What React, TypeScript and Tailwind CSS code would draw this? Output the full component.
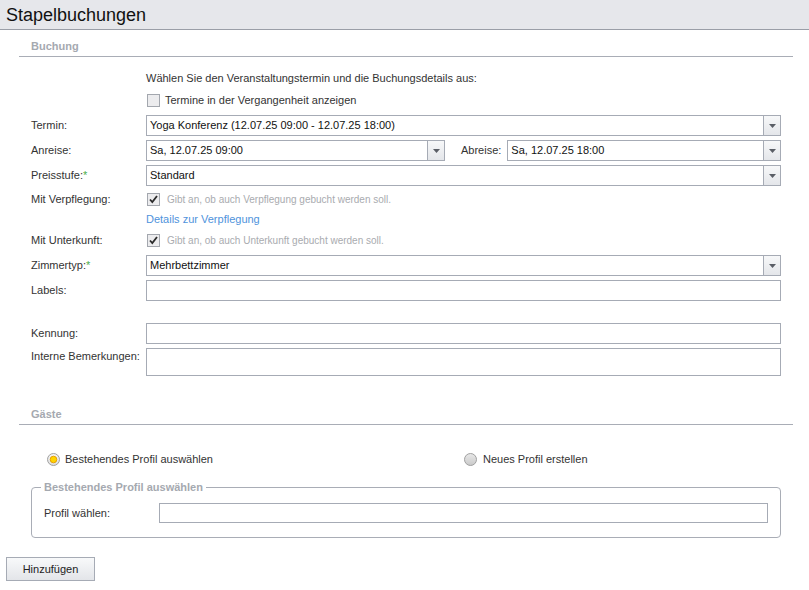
import React from 'react';

const border = 'border border-[#a6abb5]';

function Arrow() {
  return (
    <span className="w-[17px] self-stretch border-l border-[#a6abb5] bg-gradient-to-b from-[#f7f8f9] to-[#e4e6ea] flex items-center justify-center">
      <svg width="7" height="4" viewBox="0 0 7 4">
        <path d="M0 0h7L3.5 4z" fill="#5a5e66" />
      </svg>
    </span>
  );
}

function Select({ value, className = '' }: { value: string; className?: string }) {
  return (
    <div className={`${border} h-[21px] bg-white flex items-center ${className}`}>
      <span className="flex-1 px-[3px] text-[#111] truncate">{value}</span>
      <Arrow />
    </div>
  );
}

function Input({ className = 'h-[21px]' }: { className?: string }) {
  return <div className={`${border} bg-white flex-1 ${className}`} />;
}

function Checkbox({ checked }: { checked?: boolean }) {
  return (
    <span className="w-[13px] h-[13px] shrink-0 border border-[#a3a7ae] bg-[#ececee] flex items-center justify-center">
      {checked && (
        <svg width="9" height="9" viewBox="0 0 9 9">
          <path d="M1 4.5l2.3 2.6L8 1" fill="none" stroke="#2b2b2b" strokeWidth="1.8" />
        </svg>
      )}
    </span>
  );
}

function Radio({ selected }: { selected?: boolean }) {
  return (
    <svg width="13" height="13" viewBox="0 0 13 13" className="shrink-0">
      <defs>
        <linearGradient id={selected ? 'rs' : 'ru'} x1="0" y1="0" x2="0" y2="1">
          <stop offset="0" stopColor={selected ? '#f6f6f6' : '#e9e9e9'} />
          <stop offset="1" stopColor={selected ? '#dcdcdc' : '#c9c9c9'} />
        </linearGradient>
      </defs>
      <circle cx="6.5" cy="6.5" r="6" fill={`url(#${selected ? 'rs' : 'ru'})`} stroke="#a0a0a0" />
      {selected && <circle cx="6.5" cy="6.5" r="3.3" fill="#ffd400" stroke="#e29a00" strokeWidth="0.9" />}
    </svg>
  );
}

function Row({ label, required, children, className = '' }: { label?: string; required?: boolean; children: React.ReactNode; className?: string }) {
  return (
    <div className={`flex items-center ${className}`}>
      <div className="w-[115px] shrink-0">
        {label}
        {required && <span className="text-[#4cae4c]">*</span>}
      </div>
      <div className="flex-1 flex items-center">{children}</div>
    </div>
  );
}

function SectionHeader({ title, className = '' }: { title: string; className?: string }) {
  return (
    <div className={`pb-[2px] pl-[12px] leading-[16px] border-b border-[#a9adb6] font-bold text-[#a5a9b0] ${className}`}>
      {title}
    </div>
  );
}

export default function App() {
  return (
    <div className="min-h-screen bg-white font-['Liberation_Sans',Arial,sans-serif] text-[11px] text-[#333]">
      <header className="h-[30px] bg-[#e6e7eb] border-b border-[#9a9ea7] flex items-center px-[6px]">
        <h1 className="text-[18px] text-[#111] leading-none">Stapelbuchungen</h1>
      </header>

      <div className="px-[16px] ml-[3px]">
        <SectionHeader title="Buchung" className="pt-[8px]" />

        <div className="px-[12px]">
          <Row className="mt-[14px] leading-[14px]">
            <span>Wählen Sie den Veranstaltungstermin und die Buchungsdetails aus:</span>
          </Row>
          <Row className="mt-[9px] h-[13px]">
            <span className="ml-px flex items-center gap-[5px]">
              <Checkbox />
              <span>Termine in der Vergangenheit anzeigen</span>
            </span>
          </Row>

          <div className="mt-[8px] flex flex-col gap-[4px]">
            <Row label="Termin:">
              <Select value="Yoga Konferenz (12.07.25 09:00 - 12.07.25 18:00)" className="flex-1" />
            </Row>
            <Row label="Anreise:">
              <Select value="Sa, 12.07.25 09:00" className="w-[299px]" />
              <span className="ml-[16px] mr-[6px]">Abreise:</span>
              <Select value="Sa, 12.07.25 18:00" className="flex-1" />
            </Row>
            <Row label="Preisstufe:" required>
              <Select value="Standard" className="flex-1" />
            </Row>
          </div>

          <Row label="Mit Verpflegung:" className="h-[22px] mt-[2px]">
            <span className="ml-px flex items-center gap-[7px]">
              <Checkbox checked />
              <span className="text-[10px] text-[#a9abaf]">Gibt an, ob auch Verpflegung gebucht werden soll.</span>
            </span>
          </Row>
          <Row className="h-[19px]">
            <a className="text-[#4f93dc] cursor-pointer">Details zur Verpflegung</a>
          </Row>
          <Row label="Mit Unterkunft:" className="h-[22px]">
            <span className="ml-px flex items-center gap-[7px]">
              <Checkbox checked />
              <span className="text-[10px] text-[#a9abaf]">Gibt an, ob auch Unterkunft gebucht werden soll.</span>
            </span>
          </Row>

          <div className="mt-[4px] flex flex-col gap-[4px]">
            <Row label="Zimmertyp:" required>
              <Select value="Mehrbettzimmer" className="flex-1" />
            </Row>
            <Row label="Labels:">
              <Input />
            </Row>
          </div>

          <div className="mt-[22px] flex flex-col gap-[4px]">
            <Row label="Kennung:">
              <Input />
            </Row>
            <Row label="Interne Bemerkungen:" className="!items-start">
              <Input className="h-[28px]" />
            </Row>
          </div>
        </div>

        <SectionHeader title="Gäste" className="mt-[30px]" />

        <div className="px-[12px]">
          <div className="mt-[27px] h-[14px] flex items-center">
            <label className="w-[433px] pl-[16px] flex items-center gap-[5px]">
              <Radio selected />
              <span>Bestehendes Profil auswählen</span>
            </label>
            <label className="flex items-center gap-[6px]">
              <Radio />
              <span>Neues Profil erstellen</span>
            </label>
          </div>

          <fieldset className="mt-[14px] border border-[#a9adb6] rounded-[4px] px-[12px] pt-[9px] pb-[14px]">
            <legend className="ml-[-3px] px-[3px] font-bold text-[#a5a9b0] leading-[14px]">Bestehendes Profil auswählen</legend>
            <Row label="Profil wählen:">
              <Input className="h-[20px]" />
            </Row>
          </fieldset>
        </div>
      </div>

      <button className="mt-[19px] ml-[6px] w-[89px] h-[24px] border border-[#a6abb5] bg-gradient-to-b from-[#f8f9fa] to-[#e3e5e9] text-[#222]">
        Hinzufügen
      </button>
    </div>
  );
}
